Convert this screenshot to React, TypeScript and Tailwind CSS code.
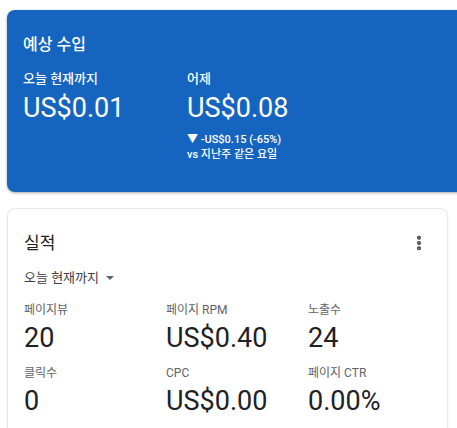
import { EllipsisVertical } from "lucide-react";

const font = { fontFamily: 'Roboto, "Noto Sans CJK KR", sans-serif' };

const metrics = [
  { label: "페이지뷰", value: "20" },
  { label: "페이지 RPM", value: "US$0.40" },
  { label: "노출수", value: "24" },
  { label: "클릭수", value: "0" },
  { label: "CPC", value: "US$0.00" },
  { label: "페이지 CTR", value: "0.00%" },
];

export default function App() {
  return (
    <div className="h-[428px] w-[457px] overflow-hidden bg-white pt-[10px]" style={font}>
      <section className="ml-[7px] h-[182px] w-[480px] rounded-lg bg-[#1565c0] px-4 pt-[24px] text-white shadow-[0_1px_3px_rgba(0,0,0,0.35)]">
        <h2 className="text-[16px] font-medium leading-[22px]">예상 수입</h2>
        <div className="mt-[14px] grid grid-cols-[164px_164px_1fr]">
          <div>
            <div className="text-[13px] font-medium leading-[18px]">오늘 현재까지</div>
            <div className="mt-[4px] text-[27px] leading-[32px]">US$0.01</div>
          </div>
          <div>
            <div className="text-[13px] font-medium leading-[18px]">어제</div>
            <div className="mt-[4px] text-[27px] leading-[32px]">US$0.08</div>
            <div className="mt-[8px] text-[11px] font-medium leading-[15px]">▼ -US$0.15 (-65%)</div>
            <div className="text-[11px] font-medium leading-[15px]">vs 지난주 같은 요일</div>
          </div>
          <div className="text-[#1666c1]">
            <div className="text-[13px] leading-[18px]">&nbsp;</div>
            <div className="mt-[4px] text-[27px] leading-[32px]">US$0.23</div>
          </div>
        </div>
      </section>

      <section className="ml-[7px] mt-[16px] h-[240px] w-[441px] rounded-lg border border-gray-200 bg-white px-4 pt-[22px] text-[#202124] shadow-[0_1px_2px_rgba(0,0,0,0.08)]">
        <div className="flex items-center justify-between">
          <h2 className="text-[17px] leading-[24px]">실적</h2>
          <EllipsisVertical size={18} strokeWidth={3.4} className="mr-[3px] text-[#3c4043]" />
        </div>
        <div className="mt-[14px] flex items-center gap-[7px] text-[13px] leading-[18px] text-[#3c4043]">
          오늘 현재까지
          <span className="h-0 w-0 border-x-[4px] border-t-[4.5px] border-x-transparent border-t-[#5f6368]" />
        </div>
        <div className="mt-[14px] grid grid-cols-[142px_142px_1fr] gap-y-[10px]">
          {metrics.map((m) => (
            <div key={m.label}>
              <div className="text-[12px] leading-[18px] text-[#5f6368]">{m.label}</div>
              <div className="mt-[3px] text-[27px] leading-[32px]">{m.value}</div>
            </div>
          ))}
        </div>
      </section>
    </div>
  );
}
